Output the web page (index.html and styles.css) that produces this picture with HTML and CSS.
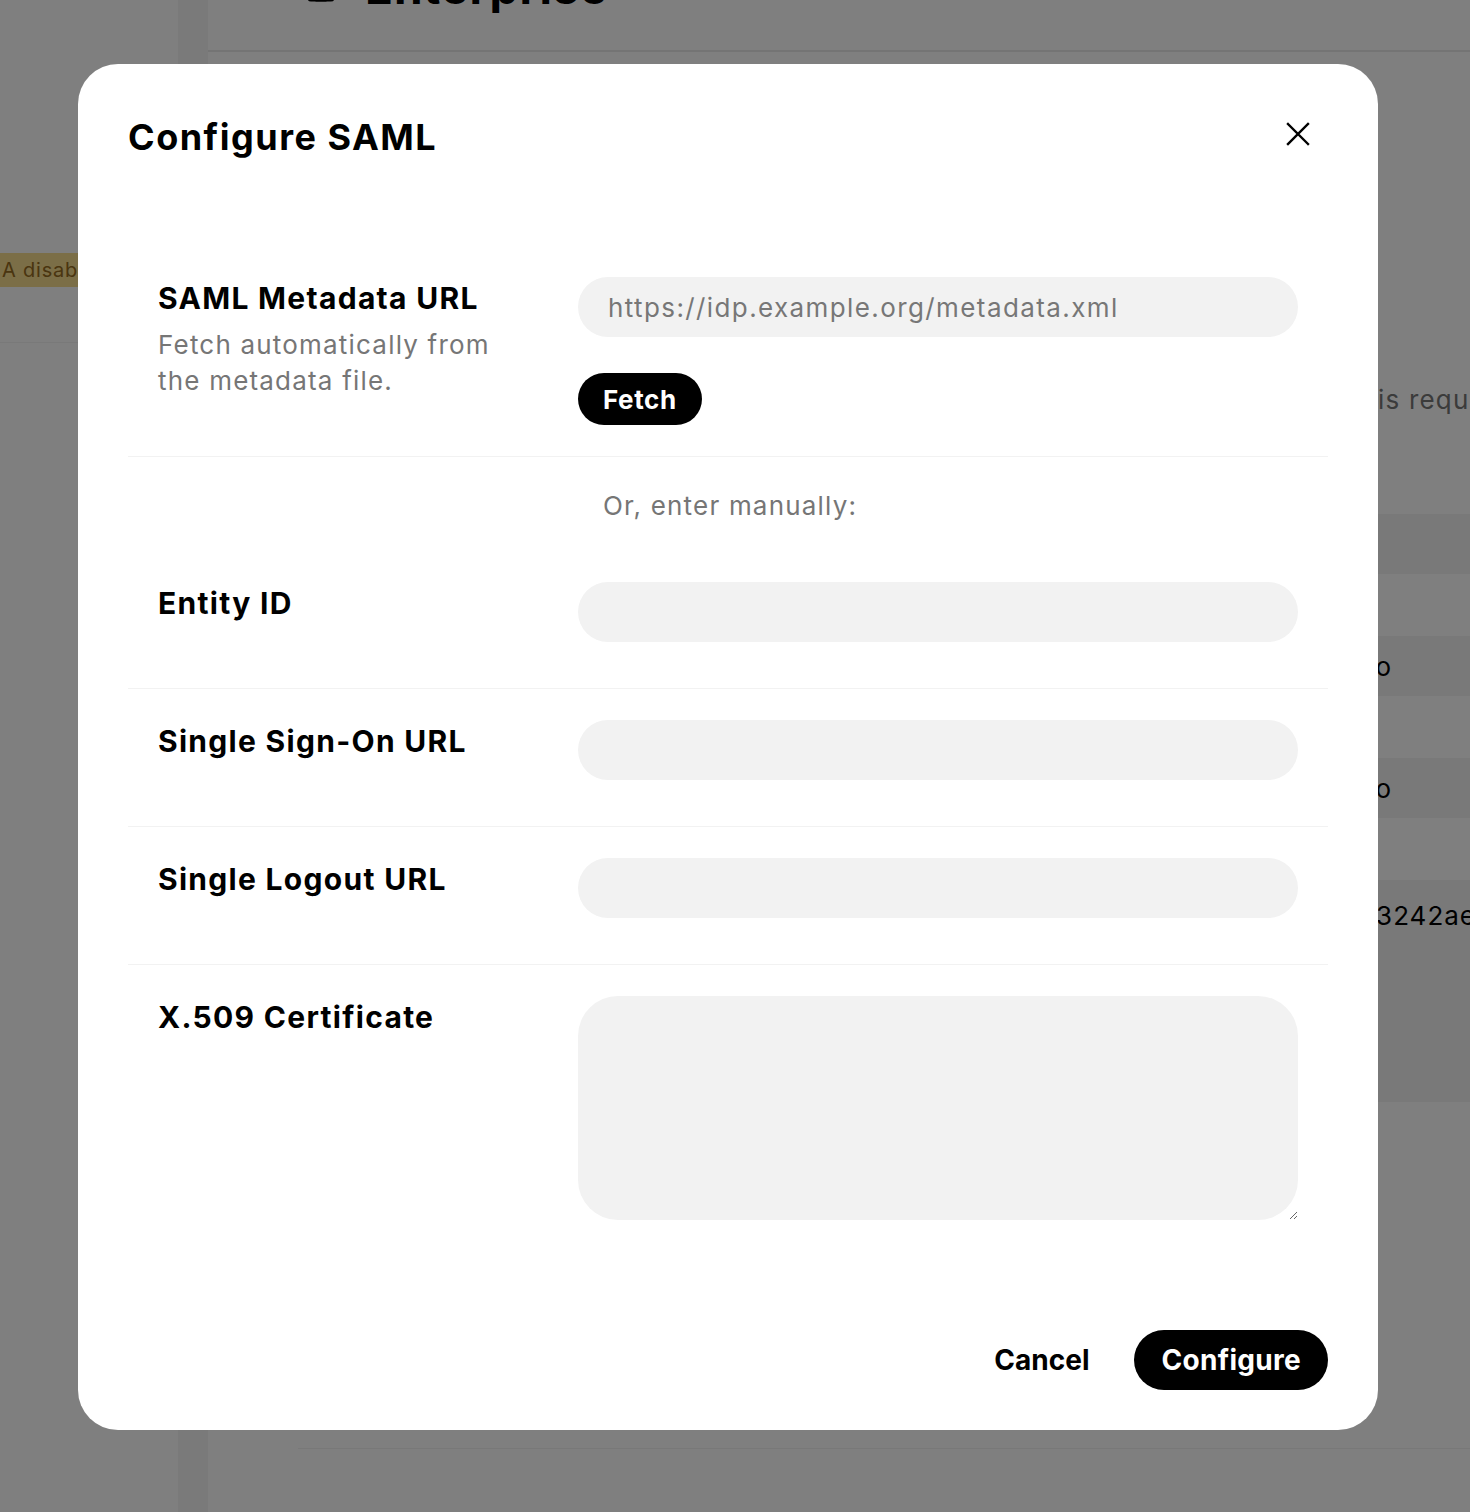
FILE: index.html
```html
<!DOCTYPE html>
<html lang="en">
<head>
    <meta charset="UTF-8">
    <meta name="viewport" content="width=device-width, initial-scale=1.0">
    <title>Configure SAML</title>
    <link rel="stylesheet" href="styles.css">
</head>
<body>
    <div class="page">
        <aside class="sidebar">
            <div class="sidebar-top"></div>
            <div class="sidebar-badge">A disabled</div>
            <div class="sidebar-item"></div>
        </aside>
        <div class="rail"></div>
        <main class="main">
            <header class="main-header">
                <svg class="main-icon" width="32" height="32" viewBox="0 0 32 32" fill="none" stroke="#000" stroke-width="3">
                    <rect x="4" y="3" width="24" height="26" rx="2"/>
                    <rect x="12" y="19" width="8" height="10" fill="#000"/>
                </svg>
                <h1>Enterprise</h1>
            </header>
            <p class="main-notice">is required for all members</p>
            <div class="table">
                <div class="table-row shaded"><span></span><span></span></div>
                <div class="table-row"><span></span><span></span></div>
                <div class="table-row shaded"><span>Enforced</span><span>No</span></div>
                <div class="table-row"><span></span><span></span></div>
                <div class="table-row shaded"><span>Just-in-time</span><span>No</span></div>
                <div class="table-row"><span></span><span></span></div>
                <div class="table-row shaded tall"><span>Connection</span><span class="table-id">83242ae51c</span></div>
            </div>
            <div class="main-footer"></div>
        </main>
    </div>

    <div class="overlay">
        <div class="modal">
            <div class="modal-head">
                <h2 class="modal-title">Configure SAML</h2>
                <button class="modal-close" type="button" aria-label="Close">
                    <svg width="24" height="24" viewBox="0 0 24 24" fill="none" stroke="#000" stroke-width="2.4" stroke-linecap="square">
                        <path d="M2 2L22 22M22 2L2 22"/>
                    </svg>
                </button>
            </div>

            <div class="modal-body">
                <div class="field-row first">
                    <div class="field-label">
                        <label for="metadata-url">SAML Metadata URL</label>
                        <p class="field-hint">Fetch automatically from the metadata file.</p>
                    </div>
                    <div class="field-control">
                        <input type="text" id="metadata-url" placeholder="https://idp.example.org/metadata.xml">
                        <button class="btn-dark btn-small" type="button">Fetch</button>
                    </div>
                </div>

                <div class="manual-row">
                    <p>Or, enter manually:</p>
                </div>

                <div class="field-row">
                    <div class="field-label">
                        <label for="entity-id">Entity ID</label>
                    </div>
                    <div class="field-control">
                        <input type="text" id="entity-id">
                    </div>
                </div>

                <div class="field-row">
                    <div class="field-label">
                        <label for="sso-url">Single Sign-On URL</label>
                    </div>
                    <div class="field-control">
                        <input type="text" id="sso-url">
                    </div>
                </div>

                <div class="field-row">
                    <div class="field-label">
                        <label for="slo-url">Single Logout URL</label>
                    </div>
                    <div class="field-control">
                        <input type="text" id="slo-url">
                    </div>
                </div>

                <div class="field-row last">
                    <div class="field-label">
                        <label for="certificate">X.509 Certificate</label>
                    </div>
                    <div class="field-control">
                        <textarea id="certificate"></textarea>
                    </div>
                </div>
            </div>

            <div class="modal-footer">
                <button class="btn-plain" type="button">Cancel</button>
                <button class="btn-dark btn-large" type="button">Configure</button>
            </div>
        </div>
    </div>
</body>
</html>
```

FILE: styles.css
```css
/* Base */
body {
    margin: 0;
    font-family: 'Inter', 'Noto Sans', sans-serif;
    color: #000;
    background: #fff;
    overflow: hidden;
}

p {
    margin: 0;
}

/* Page behind the dialog */
.page {
    display: flex;
    height: 1512px;
}

.sidebar {
    width: 178px;
    flex-shrink: 0;
    background: #fff;
}

.sidebar-top {
    height: 253px;
}

.sidebar-badge {
    height: 34px;
    line-height: 34px;
    padding-left: 2px;
    background: #f6dc8e;
    color: #946a20;
    font-size: 20px;
    letter-spacing: 0.8px;
    white-space: nowrap;
    overflow: hidden;
}

.sidebar-item {
    height: 55px;
    border-bottom: 1px solid #f2f2f2;
}

.rail {
    width: 30px;
    flex-shrink: 0;
    background: #f4f4f4;
}

.main {
    flex: 1;
    min-width: 0;
    overflow: hidden;
}

.main-header {
    display: flex;
    align-items: center;
    gap: 28px;
    height: 110px;
    margin-top: -60px;
    padding-left: 97px;
    border-bottom: 2px solid #e8e8e8;
}

.main-header h1 {
    margin: 0 0 16px;
    font-size: 46px;
    font-weight: 700;
    letter-spacing: 1px;
}

.main-icon {
    margin-bottom: 16px;
}

.main-notice {
    margin-top: 330px;
    padding-left: 1170px;
    font-size: 26px;
    line-height: 36px;
    letter-spacing: 1.2px;
    color: #767676;
    white-space: nowrap;
}

.table {
    margin-top: 96px;
}

.table-row {
    display: grid;
    grid-template-columns: 1fr 115px;
    align-items: center;
    height: 60px;
    font-size: 26px;
    letter-spacing: 1px;
    white-space: nowrap;
    overflow: hidden;
}

.table-row + .table-row {
    margin-top: 1px;
}

.table-row.shaded {
    background: #f3f3f3;
}

.table-row.tall {
    height: 222px;
    align-items: start;
    padding-top: 20px;
    box-sizing: border-box;
}

.table-id {
    padding-left: 4px;
}

.main-footer {
    margin-top: 346px;
    margin-left: 90px;
    border-top: 1px solid #f0f0f0;
}

/* Dialog */
.overlay {
    position: fixed;
    inset: 0;
    background: rgba(0, 0, 0, 0.5);
}

.modal {
    position: absolute;
    left: 78px;
    top: 64px;
    width: 1300px;
    height: 1366px;
    box-sizing: border-box;
    padding: 50px 50px 40px;
    background: #fff;
    border-radius: 40px;
    display: flex;
    flex-direction: column;
}

.modal-head {
    display: flex;
    justify-content: space-between;
    align-items: flex-start;
}

.modal-title {
    margin: 0;
    font-size: 36px;
    line-height: 46px;
    font-weight: 700;
    letter-spacing: 1.5px;
}

.modal-close {
    width: 40px;
    height: 40px;
    margin-right: 10px;
    padding: 0;
    border: none;
    background: none;
    display: flex;
    align-items: center;
    justify-content: center;
    cursor: pointer;
}

.modal-body {
    margin-top: 86px;
}

.field-row {
    display: grid;
    grid-template-columns: 450px 720px;
    padding: 31px 0 30px;
    border-bottom: 1px solid #f2f2f2;
}

.field-row.first {
    padding-bottom: 31px;
}

.field-row.last {
    border-bottom: none;
}

.field-label {
    padding-left: 30px;
}

.field-label label {
    display: block;
    padding-top: 1px;
    font-size: 30px;
    line-height: 40px;
    font-weight: 700;
    letter-spacing: 1.3px;
}

.field-hint {
    margin-top: 9px;
    max-width: 360px;
    font-size: 26px;
    line-height: 36px;
    letter-spacing: 1.2px;
    color: #767676;
}

.field-control {
    display: flex;
    flex-direction: column;
    align-items: flex-start;
}

input,
textarea {
    width: 100%;
    box-sizing: border-box;
    margin: 0 0 16px;
    border: none;
    background: #f2f2f2;
    font-family: inherit;
    font-size: 26px;
    letter-spacing: 1.4px;
    color: #000;
}

input {
    height: 60px;
    padding: 0 30px;
    border-radius: 30px;
}

textarea {
    height: 224px;
    padding: 16px 30px;
    border-radius: 40px;
    resize: vertical;
}

input::placeholder {
    color: #777;
}

input:focus,
textarea:focus {
    outline: none;
}

.manual-row {
    padding: 31px 0 27px 475px;
    font-size: 26px;
    line-height: 36px;
    letter-spacing: 1.2px;
    color: #767676;
}

/* Buttons */
button {
    font-family: inherit;
    cursor: pointer;
}

.btn-dark {
    border: none;
    background: #000;
    color: #fff;
    font-weight: 700;
}

.btn-small {
    height: 52px;
    margin-top: 20px;
    padding: 0 25px;
    border-radius: 26px;
    font-size: 26px;
    letter-spacing: 0.6px;
}

.btn-large {
    height: 60px;
    padding: 0 27px;
    border-radius: 30px;
    font-size: 28px;
    letter-spacing: 0.3px;
}

.btn-plain {
    height: 60px;
    padding: 0 22px;
    border: none;
    background: none;
    font-size: 28px;
    font-weight: 700;
}

.modal-footer {
    margin-top: auto;
    display: flex;
    justify-content: flex-end;
    gap: 23px;
}
```
